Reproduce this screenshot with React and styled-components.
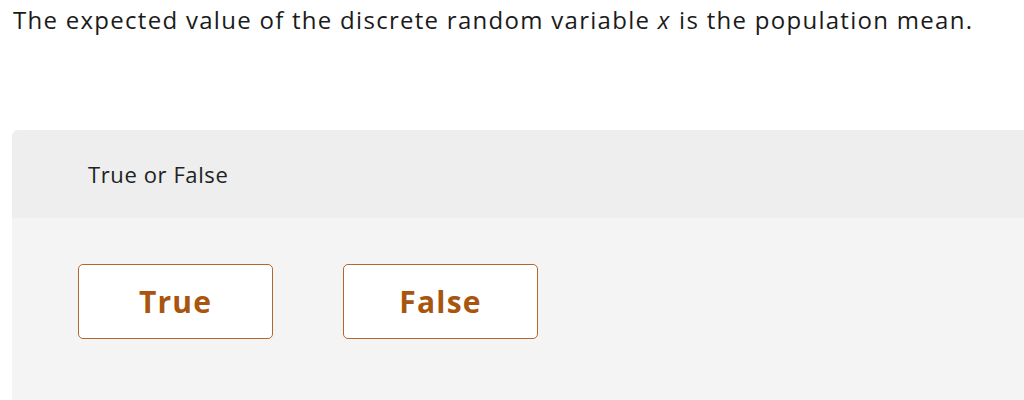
import React from 'react'
import styled, { createGlobalStyle } from 'styled-components'

const GlobalStyle = createGlobalStyle`
    html, body {
        margin: 0;
        padding: 0;
        background: #ffffff;
        overflow: hidden;
    }
    body {
        font-family: 'Open Sans', 'Lato', sans-serif;
    }
`

const Page = styled.div`
    width: 1024px;
    height: 400px;
    display: flex;
    flex-direction: column;
`

const Question = styled.p`
    margin: 0;
    padding: 4px 0 0 13px;
    font-size: 24px;
    line-height: 32px;
    letter-spacing: 1.28px;
    color: #1b1b1b;
    white-space: nowrap;

    em {
        font-style: italic;
        margin-right: 1px;
    }
`

const Panel = styled.section`
    margin: 94px 0 0 12px;
    flex: 1;
    display: flex;
    flex-direction: column;
    border-top-left-radius: 6px;
    overflow: hidden;
`

const PanelHeader = styled.div`
    height: 88px;
    display: flex;
    align-items: center;
    padding-left: 76px;
    background: #eeeeee;
    font-size: 22px;
    letter-spacing: 0.6px;
    color: #222222;
`

const PanelBody = styled.div`
    flex: 1;
    background: #f4f4f4;
    display: flex;
    align-items: flex-start;
    gap: 70px;
    padding: 46px 0 0 66px;
`

const Choice = styled.button`
    width: 195px;
    height: 75px;
    box-sizing: border-box;
    background: #ffffff;
    border: 1.5px solid #b1672d;
    border-radius: 5px;
    font-family: 'Open Sans', 'Lato', sans-serif;
    font-weight: 700;
    font-size: 30px;
    letter-spacing: 1.2px;
    color: #a8560f;
    cursor: pointer;
    padding: 0;
`

const App = () => {
  return (
    <Page>
        <GlobalStyle />
        <Question>
            The expected value of the discrete random variable <em>x</em> is the population mean.
        </Question>
        <Panel>
            <PanelHeader>True or False</PanelHeader>
            <PanelBody>
                <Choice>True</Choice>
                <Choice>False</Choice>
            </PanelBody>
        </Panel>
    </Page>
  )
}

export default App
